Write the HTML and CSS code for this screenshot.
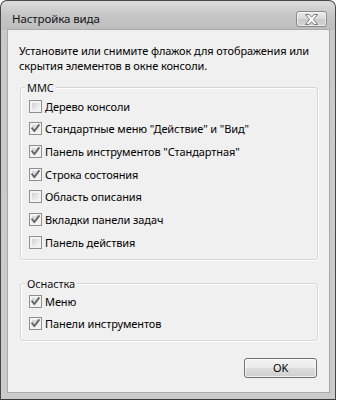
FILE: index.html
```html
<!DOCTYPE html>
<html lang="ru">
<head>
<meta charset="utf-8">
<title>Настройка вида</title>
<link rel="stylesheet" href="styles.css">
</head>
<body>
<div class="window">
  <div class="titlebar">
    <span class="title">Настройка вида</span>
    <span class="close">
      <svg width="15" height="11" viewBox="0 0 15 11"><path d="M1.5 0.5 H5 L7.5 3.2 L10 0.5 H13.5 L9.5 5.5 L13.5 10.5 H10 L7.5 7.8 L5 10.5 H1.5 L5.5 5.5 Z" fill="#fafafa" stroke="#7a7a7a" stroke-width="1" stroke-linejoin="round"/></svg>
    </span>
  </div>
  <div class="client">
    <p class="intro">Установите или снимите флажок для отображения или скрытия элементов в окне консоли.</p>
    <div class="group group-mmc">
      <div class="legend">MMC</div>
      <div class="row"><span class="cb"></span><span>Дерево консоли</span></div>
      <div class="row"><span class="cb checked"><svg viewBox="0 0 13 13"><path d="M3.2 6.4 L5.4 9 L9.8 3.2"/></svg></span><span>Стандартные меню "Действие" и "Вид"</span></div>
      <div class="row"><span class="cb checked"><svg viewBox="0 0 13 13"><path d="M3.2 6.4 L5.4 9 L9.8 3.2"/></svg></span><span>Панель инструментов "Стандартная"</span></div>
      <div class="row"><span class="cb checked"><svg viewBox="0 0 13 13"><path d="M3.2 6.4 L5.4 9 L9.8 3.2"/></svg></span><span>Строка состояния</span></div>
      <div class="row"><span class="cb"></span><span>Область описания</span></div>
      <div class="row"><span class="cb checked"><svg viewBox="0 0 13 13"><path d="M3.2 6.4 L5.4 9 L9.8 3.2"/></svg></span><span>Вкладки панели задач</span></div>
      <div class="row"><span class="cb"></span><span>Панель действия</span></div>
    </div>
    <div class="group group-snap">
      <div class="legend">Оснастка</div>
      <div class="row"><span class="cb checked"><svg viewBox="0 0 13 13"><path d="M3.2 6.4 L5.4 9 L9.8 3.2"/></svg></span><span>Меню</span></div>
      <div class="row"><span class="cb checked"><svg viewBox="0 0 13 13"><path d="M3.2 6.4 L5.4 9 L9.8 3.2"/></svg></span><span>Панели инструментов</span></div>
    </div>
    <div class="actions"><span class="ok">OK</span></div>
  </div>
</div>
</body>
</html>
```
FILE: styles.css
```css
* { box-sizing: border-box; }
html, body { margin: 0; padding: 0; background: #ffffff; }
body {
  font-family: "Noto Sans", "Open Sans", sans-serif;
  font-size: 11px;
  letter-spacing: -0.1px;
  color: #000;
}
.window {
  width: 336px;
  height: 400px;
  border: 1px solid #474747;
  border-bottom-color: #3a3a3a;
  border-radius: 7px 7px 0 0;
  background: linear-gradient(to bottom, #dddddd 0, #c6c6c6 14px, #bdbdbd 29px, #c9c9c9 29px, #cbcbcb 100%);
  padding: 0 6px 7px 7px;
  display: flex;
  flex-direction: column;
}
.titlebar {
  height: 29px;
  display: flex;
  align-items: flex-start;
  justify-content: space-between;
  padding-top: 10px;
}
.title {
  margin-left: 4px;
  font-size: 11.5px;
  line-height: 16px;
  color: #111;
}
.close {
  width: 31px;
  height: 16px;
  margin-right: 2px;
  border: 1px solid #8a8a8a;
  border-radius: 3px;
  background: linear-gradient(to bottom, #e9e9e9 0, #d9d9d9 50%, #c9c9c9 50%, #d4d4d4 100%);
  box-shadow: inset 0 0 0 1px rgba(255,255,255,0.55);
  display: flex;
  align-items: center;
  justify-content: center;
}
.close svg { display: block; }
.client {
  flex: 1;
  background: #f0f0f0;
  box-shadow: 0 0 0 1px #a9a9a9;
  padding: 0 11px 0 12px;
  display: flex;
  flex-direction: column;
}
.intro {
  margin: 13px -6px 14px -1px;
  line-height: 15px;
}
.group {
  border: 1px solid #d6d6d6;
  border-radius: 3px;
  box-shadow: inset 1px 1px 0 #ffffff, 1px 1px 0 #ffffff;
  padding: 0 0 5px 0;
}
.legend {
  width: fit-content;
  margin: -8px 0 0 4px;
  padding: 0 2px;
  line-height: 15px;
  background: #f0f0f0;
  color: #111;
}
.group-mmc .row { height: 22.67px; }
.group-snap { margin-top: 23px; }
.group-snap .row { height: 22px; }
.row {
  display: flex;
  align-items: center;
  gap: 3px;
  padding-left: 8px;
  line-height: 15px;
}
.cb {
  width: 13px;
  height: 13px;
  flex: none;
  position: relative;
  border: 1px solid #8e8f8f;
  padding: 2px;
  background: linear-gradient(135deg, #d2d2d2, #f6f6f6) content-box, #f3f3f3;
}
.cb svg {
  position: absolute;
  left: -1px;
  top: -1px;
  width: 13px;
  height: 13px;
}
.cb svg path {
  fill: none;
  stroke: #666666;
  stroke-width: 1.9;
  stroke-linecap: square;
}
.actions {
  display: flex;
  justify-content: flex-end;
  margin-top: 17px;
  padding-right: 1px;
}
.ok {
  width: 73px;
  height: 20px;
  border: 1px solid #707070;
  border-radius: 3px;
  background: linear-gradient(to bottom, #f3f3f3 0, #ebebeb 48%, #dddddd 52%, #cfcfcf 100%);
  box-shadow: inset 0 0 0 1px rgba(255,255,255,0.7);
  display: flex;
  align-items: center;
  justify-content: center;
  line-height: 16px;
}
```
